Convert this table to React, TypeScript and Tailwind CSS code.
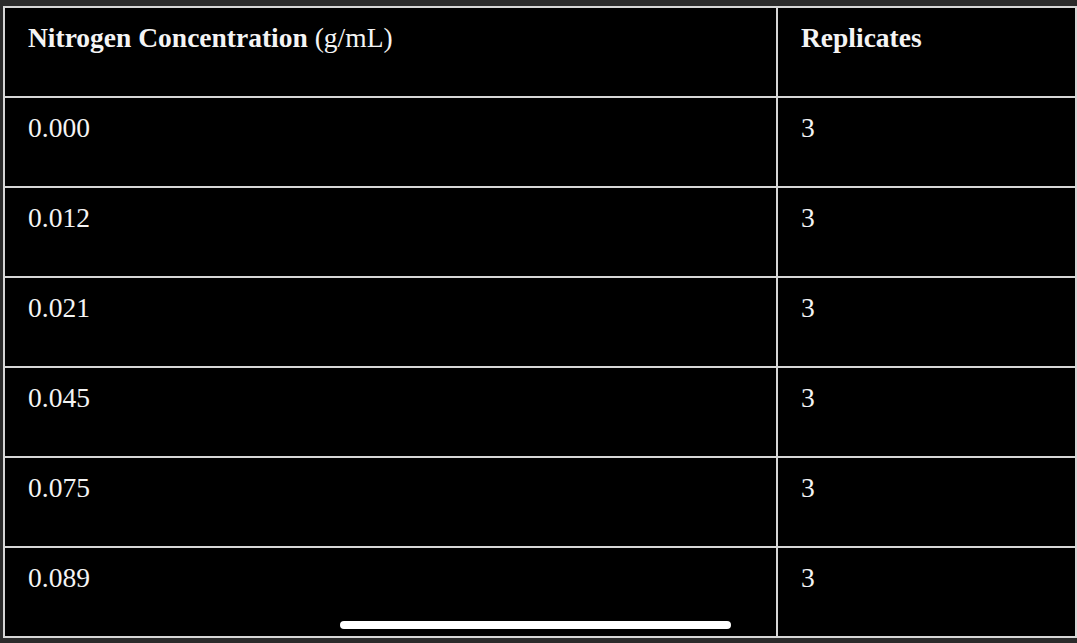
import React from "react";

const rows = ["0.000", "0.012", "0.021", "0.045", "0.075", "0.089"];

export default function App() {
  const font = { fontFamily: '"Liberation Serif", "Times New Roman", serif' };
  return (
    <div
      className="relative w-[1077px] h-[643px] overflow-hidden bg-[#2b2b2b] pt-[6px] pl-[3px]"
      style={font}
    >
      <div className="w-[1074px] border-2 border-[#d6d6d6] bg-black text-[27.5px] leading-[30px] text-[#f4f4f4]">
        <div className="flex h-[90px] border-b-2 border-[#d6d6d6]">
          <div className="w-[773px] border-r-2 border-[#d6d6d6] pl-[23px] pt-[15px]">
            <span className="font-bold">Nitrogen Concentration</span> (g/mL)
          </div>
          <div className="flex-1 pl-[23px] pt-[15px] font-bold">Replicates</div>
        </div>
        {rows.map((r, i) => (
          <div
            key={r}
            className={
              i < rows.length - 1
                ? "flex h-[90px] border-b-2 border-[#d6d6d6]"
                : "flex h-[88px]"
            }
          >
            <div className="w-[773px] border-r-2 border-[#d6d6d6] pl-[23px] pt-[15px]">{r}</div>
            <div className="flex-1 pl-[23px] pt-[15px]">3</div>
          </div>
        ))}
      </div>
      <div className="absolute left-[340px] top-[621px] w-[391px] h-[8px] rounded-full bg-white" />
    </div>
  );
}
